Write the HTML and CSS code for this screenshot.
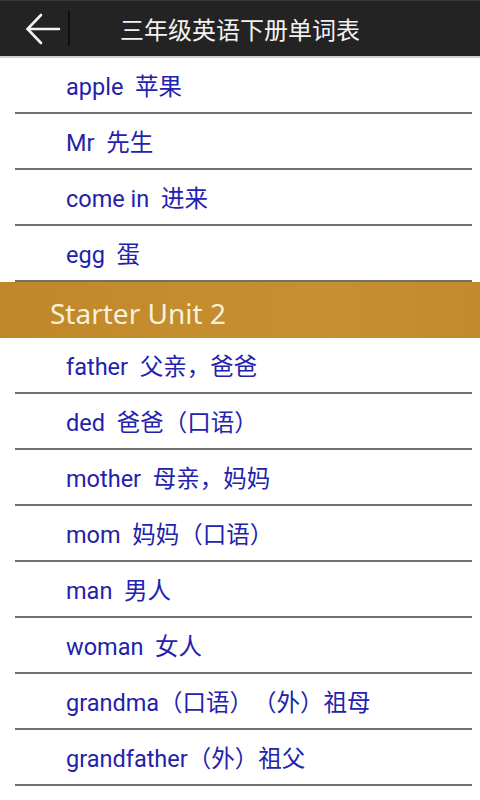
FILE: index.html
```html
<!DOCTYPE html>
<html>
<head>
<meta charset="utf-8">
<link rel="stylesheet" href="styles.css">
</head>
<body>
<div class="header">
  <div class="back">
    <svg width="36" height="32" viewBox="0 0 36 32"><path d="M34 16 H3 M16 2 L2.5 16 L16 30" fill="none" stroke="#f4f4f4" stroke-width="2.6" stroke-linecap="round" stroke-linejoin="miter"/></svg>
  </div>
  <div class="sep"></div>
  <div class="title">三年级英语下册单词表</div>
</div>
<div class="list">
  <div class="row"><span>apple  苹果</span></div>
  <div class="row"><span>Mr  先生</span></div>
  <div class="row"><span>come in  进来</span></div>
  <div class="row"><span>egg  蛋</span></div>
  <div class="band">Starter Unit 2</div>
  <div class="row"><span>father  父亲，爸爸</span></div>
  <div class="row"><span>ded  爸爸（口语）</span></div>
  <div class="row"><span>mother  母亲，妈妈</span></div>
  <div class="row"><span>mom  妈妈（口语）</span></div>
  <div class="row"><span>man  男人</span></div>
  <div class="row"><span>woman  女人</span></div>
  <div class="row"><span>grandma（口语）（外）祖母</span></div>
  <div class="row"><span>grandfather（外）祖父</span></div>
</div>
</body>
</html>
```
FILE: styles.css
```css
html, body {
  margin: 0;
  padding: 0;
  background: #ffffff;
}
body {
  width: 480px;
  height: 800px;
  overflow: hidden;
  font-family: Roboto, "Noto Sans CJK SC", sans-serif;
  text-spacing-trim: space-all;
}
.header {
  height: 55px;
  background: #232323;
  border-top: 1px solid #3a3a3a;
  border-bottom: 2px solid #cfcfcf;
  display: flex;
  align-items: center;
  position: relative;
}
.back {
  width: 36px;
  height: 32px;
  margin-left: 25px;
  display: flex;
}
.sep {
  width: 2px;
  height: 35px;
  background: #0e0e0e;
  margin-left: 7px;
}
.title {
  position: absolute;
  left: 0;
  right: 0;
  top: 0;
  bottom: 0;
  display: flex;
  align-items: center;
  justify-content: center;
  color: #f2f2f2;
  font-size: 24px;
  font-family: "Noto Sans CJK SC", sans-serif;
  pointer-events: none;
}
.list {
  display: flex;
  flex-direction: column;
}
.row {
  height: 54px;
  margin: 0 8px 0 15px;
  padding-left: 51px;
  border-bottom: 2px solid #707070;
  display: flex;
  align-items: center;
  color: #2222ad;
  font-size: 23.5px;
  white-space: pre;
}
.band {
  height: 56px;
  background: linear-gradient(90deg, #c08729 0%, #c48d2d 40%, #c68f30 70%, #c38a2b 100%);
  color: #f7f1dc;
  font-family: "Noto Sans", sans-serif;
  font-size: 28px;
  padding-left: 50px;
  display: flex;
  align-items: center;
  padding-top: 6px;
  box-sizing: border-box;
}
```
